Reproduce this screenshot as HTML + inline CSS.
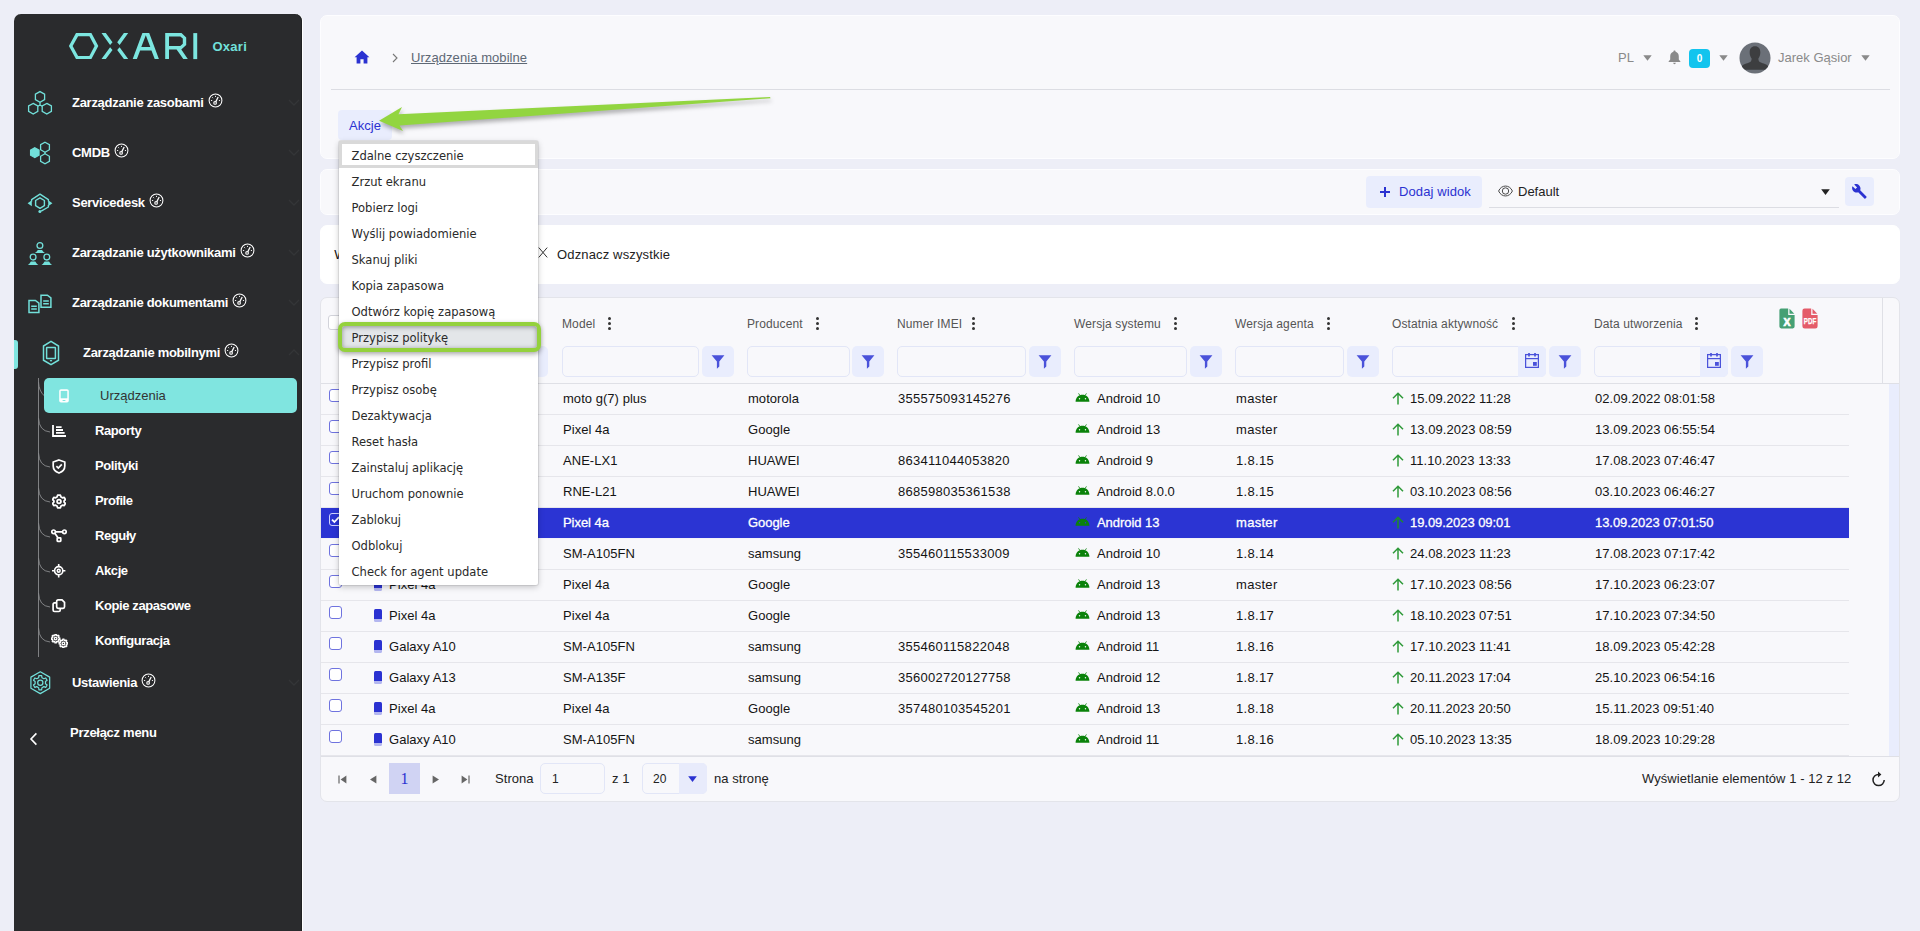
<!DOCTYPE html>
<html lang="pl"><head><meta charset="utf-8"><title>Urządzenia mobilne</title>
<style>
*{box-sizing:border-box;margin:0;padding:0}
html,body{width:1920px;height:931px;overflow:hidden}
body{background:#edeef7;font-family:"Liberation Sans",sans-serif;font-size:13px;color:#1e1e1e;position:relative}
.abs{position:absolute}
/* sidebar */
#side{position:absolute;left:14px;top:14px;width:288px;height:930px;background:#2a2b2d;border-radius:7px 7px 0 0;box-shadow:inset -1px 0 0 #1f2022, 1px 0 0 #fff}
.logo-t{position:absolute;left:198.5px;top:25px;color:#72e0da;font-weight:bold;font-size:13px;letter-spacing:0.25px}
.nav{position:absolute;left:58px;color:#fff;font-weight:bold;font-size:13px;letter-spacing:-0.28px;white-space:nowrap;line-height:16px}
.nav svg.g{vertical-align:top;margin-left:4px;position:relative;top:-2px}
.sub{position:absolute;left:81px;color:#fff;font-weight:bold;font-size:13px;letter-spacing:-0.4px;white-space:nowrap;line-height:16px}
.chev{position:absolute;left:274px}
.ico{position:absolute}
#active{position:absolute;left:30px;top:364px;width:253px;height:35px;background:#80e5e0;border-radius:5px}
#active span{position:absolute;left:56px;top:10px;font-size:13px;color:#333;line-height:16px}
#bar{position:absolute;left:0;top:326px;width:4px;height:29px;background:#80e5e0;border-radius:0 3px 3px 0}
/* cards */
.card{position:absolute;left:320px;width:1580px;background:#f8f8fb;border-radius:7px;border:1px solid #fdfdff}
#c1{top:15px;height:144px}
#c2{top:169px;height:46px}
#c3{top:225px;height:59px;background:#fff;border-color:#fff}
#c4{top:297px;height:505px;border:1px solid #e3e4ea;overflow:hidden}
.hr{position:absolute;left:331px;top:89px;width:1559px;height:1px;background:#dcdde3}
.crumb{position:absolute;left:411px;top:50px;font-size:13px;color:#5e6875;text-decoration:underline;letter-spacing:0.07px;line-height:16px}
.top-t{position:absolute;font-size:13px;color:#8a8a8a;line-height:16px;letter-spacing:0}
#akcje{position:absolute;left:338px;top:110px;width:54px;height:30px;background:#e9edfd;border-radius:4px;color:#2b32d1;font-size:13px;line-height:32px;padding-left:11px;letter-spacing:0.05px}
#dodaj{position:absolute;left:1366px;top:176px;width:116px;height:32px;background:#e9edfd;border-radius:4px;color:#2b32d1;font-size:13px;line-height:31px;padding-left:33px;letter-spacing:0.1px}
#wrench{position:absolute;left:1845px;top:177px;width:29px;height:29px;background:#e9edfd;border-radius:4px}
#defsel{position:absolute;left:1489px;top:176px;width:350px;height:32px;border-bottom:1px solid #dcdde3}
#defsel span{position:absolute;left:29px;top:8px;font-size:13px;line-height:16px;color:#222;letter-spacing:0}
#odz{position:absolute;left:557px;top:247px;font-size:13px;line-height:16px;color:#222;letter-spacing:0.15px}
/* table */
.th{position:absolute;top:317px;font-size:12px;color:#555;line-height:15px;letter-spacing:0.12px;white-space:nowrap}
.dots{position:absolute;top:317px;width:4px}
.dots i{display:block;width:3px;height:3px;border-radius:50%;background:#333;margin-bottom:2px}
.fin{position:absolute;top:346px;height:31px;border:1px solid #e2e6f7;border-radius:5px;background:#f8f8fb}
.fbtn{position:absolute;top:346px;width:32px;height:31px;border-radius:5px;background:#e9edfd}
.fbtn svg{position:absolute;left:9px;top:9px}
.cal{position:absolute;top:346px;width:28px;height:31px;border-radius:0 5px 5px 0;background:#e9edfd}
#thline{position:absolute;left:321px;top:383px;width:1578px;height:1px;background:#dfe0e6}
#vline{position:absolute;left:1882px;top:298px;width:1px;height:85px;background:#dfe0e6}
#scroll{position:absolute;left:1889px;top:384px;width:10px;height:372px;background:#e9edfd}
.row{position:absolute;left:321px;width:1528px;height:31px;border-bottom:1px solid #e6e6eb;font-size:13px;line-height:16px;color:#141414;letter-spacing:0.04px}
.row.sel{background:#2b34d3;color:#fff;border-bottom-color:#f3f3f8;-webkit-text-stroke:0.3px #fff;letter-spacing:-0.05px}
.row.sel .rbg{position:absolute;left:0;top:0;width:100%;height:30px;background:#2b34d3}
.row.sel .up path{stroke:#1f8c2d}
.row .c{position:absolute;top:7px;white-space:nowrap}
.c0{left:68px}.c1{left:242px}.c2{left:427px}.c3{left:577px;letter-spacing:0.28px}.c4{left:776px}.c5{left:915px;letter-spacing:0.3px}.c6{left:1089px}.c7{left:1274px}
.cb{position:absolute;left:8px;top:5px;width:13px;height:13px;border:1px solid #6f73df;border-radius:3px;background:#fff}
.cb.on{background:#2b34d3;border-color:#cfd2ff}
.cb svg{position:absolute;left:-1px;top:-1px}
.dev{position:absolute;left:52.8px;top:7.7px;width:8.4px;height:13px;background:#2b32d1;border-radius:1.5px;border-bottom:3.6px solid #b4b7f0}
.andr{position:absolute;left:754px;top:9px}
.up{position:absolute;left:1071px;top:8px}
#pager{position:absolute;left:321px;top:756px;width:1578px;height:44px;border-top:1px solid #dfe0e6}
.pg-t{position:absolute;font-size:13px;line-height:16px;color:#222;letter-spacing:0.06px;white-space:nowrap}
/* dropdown */
#menu{position:absolute;left:339px;top:141px;width:199px;height:444px;background:#fff;box-shadow:0 2px 6px rgba(0,0,0,.22),0 0 0 1px rgba(0,0,0,.07);border-radius:2px;font-family:"DejaVu Sans Condensed","DejaVu Sans","Liberation Sans",sans-serif}
.mi{position:absolute;left:0;width:199px;height:26px;line-height:27px;padding-left:12.5px;font-size:12.85px;color:#2a2a2a;letter-spacing:0;white-space:nowrap}
.mi.first{border:3px solid #d9d9d9;padding-left:9.5px;line-height:23px;height:27px;background:#fff}
#hl{position:absolute;left:338px;top:322px;width:203px;height:30px;border:4px solid #94d13d;border-radius:7px;background:#e3e6e9;box-shadow:0 2px 5px rgba(0,0,0,.35), inset 0 1px 5px rgba(0,0,0,.38)}
#hl span{position:absolute;left:9.5px;top:0;line-height:24px;font-size:12.85px;color:#2a2a2a;letter-spacing:0;font-family:"DejaVu Sans Condensed","DejaVu Sans","Liberation Sans",sans-serif;white-space:nowrap}

</style></head>
<body>
<div id="side">
  <!-- logo -->
  <svg class="ico" style="left:50px;top:16px" width="140" height="32" viewBox="64 30 140 32">
    <g fill="#7ce6e0">
      <path fill-rule="evenodd" d="M68.9 46.1 L76 33.1 H91.4 L98.3 46.1 L91.4 59.1 H76 Z M72.6 46.1 L78.1 55.9 H89.4 L94.6 46.1 L89.4 36.3 H78.1 Z"/>
      <path d="M101.5 33.1 H105.8 L112.5 42.3 L110.1 44.9 Z M101.5 59.1 H105.8 L112.5 49.9 L110.1 47.3 Z"/>
      <path d="M128.2 33.1 H123.9 L117.2 42.3 L119.6 44.9 Z M128.2 59.1 H123.9 L117.2 49.9 L119.6 47.3 Z"/>
      <path fill-rule="evenodd" d="M132.7 59.1 L142.4 33.1 H149.2 L158.9 59.1 H154.7 L151.45 50.4 H140.15 L136.9 59.1 Z M141.3 47.1 H150.3 L145.8 35.2 Z"/>
      <path fill-rule="evenodd" d="M165.2 59.1 V33.1 H181.5 L186.2 37.4 V45 L181.3 49.4 L187.8 59.1 H183.3 L176.6 49.4 H169 V59.1 Z M169 36.4 V46.1 H180.3 L182.8 43.8 V38.6 L180.3 36.4 Z"/>
      <rect x="193.3" y="33.1" width="3.9" height="26"/>
    </g>
  </svg>
  <div class="logo-t">Oxari</div>

  <div id="bar"></div>

  <!-- nav icons -->
  <svg class="ico" style="left:13px;top:76px" width="26" height="26" viewBox="0 0 26 26" fill="none" stroke="#72e0da" stroke-width="1.3">
    <polygon points="13,1.6 17.6,4.2 17.6,9.6 13,12.2 8.4,9.6 8.4,4.2"/>
    <polygon points="6.2,13.4 10.8,16 10.8,21.4 6.2,24 1.6,21.4 1.6,16"/>
    <polygon points="19.8,13.4 24.4,16 24.4,21.4 19.8,24 15.2,21.4 15.2,16"/>
    <path d="M13 12.2 V15 M13 15 L10.8 16.2 M13 15 L15.2 16.2"/>
  </svg>
  <svg class="ico" style="left:13px;top:126px" width="26" height="26" viewBox="0 0 26 26" fill="none" stroke="#72e0da" stroke-width="1.3">
    <polygon points="7.8,7.8 12,10.2 12,15.2 7.8,17.6 3.6,15.2 3.6,10.2" fill="#72e0da"/>
    <polygon points="18,2.2 22.4,4.7 22.4,9.7 18,12.2 13.6,9.7 13.6,4.7"/>
    <polygon points="18,13.8 22.4,16.3 22.4,21.3 18,23.8 13.6,21.3 13.6,16.3"/>
    <path d="M18 12.2 V13.8"/>
  </svg>
  <svg class="ico" style="left:13px;top:178px" width="26" height="22" viewBox="0 0 26 22" fill="none" stroke="#72e0da" stroke-width="1.4" stroke-linejoin="round">
    <polygon points="13,5.9 17.4,8.5 17.4,13.7 13,16.3 8.6,13.7 8.6,8.5"/>
    <path d="M4.6 9.6 V7.6 L13 2.2 L21.4 7.6 V9.6 M21.4 13 V15 L14.2 19.2"/>
    <path d="M0.6 11.3 L4.8 8.3 V14.3 Z M25.4 11.3 L21.2 8.3 V14.3 Z" fill="#72e0da" stroke="none"/>
    <circle cx="12.9" cy="19.6" r="1.5" fill="#72e0da" stroke="none"/>
  </svg>
  <svg class="ico" style="left:13px;top:226px" width="26" height="26" viewBox="0 0 26 26" fill="none" stroke="#72e0da" stroke-width="1.3">
    <circle cx="12.9" cy="5.5" r="2.9"/>
    <path d="M7.9 13 Q9.6 12 10.8 9.9 H15 Q16.2 12 17.9 13 Z" fill="#72e0da" stroke="none"/>
    <circle cx="6.1" cy="17.1" r="2.9"/>
    <path d="M0.8 25 Q2.6 24 3.9 21.6 H8.3 Q9.6 24 11.4 25 Z" fill="#72e0da" stroke="none"/>
    <circle cx="19.8" cy="17.1" r="2.9"/>
    <path d="M14.5 25 Q16.3 24 17.6 21.6 H22 Q23.3 24 25.1 25 Z" fill="#72e0da" stroke="none"/>
  </svg>
  <svg class="ico" style="left:13px;top:279px" width="26" height="22" viewBox="0 0 26 22" fill="none" stroke="#72e0da" stroke-width="1.5">
    <path d="M14 2.2 H20.4 L23.9 4.9 V14.3 H14 Z"/>
    <path d="M16.2 8 H21.8 M16.2 10.8 H21.8" stroke-width="1.4"/>
    <path d="M2 7.4 H8.4 L11.9 10.1 V19.6 H2 Z"/>
    <path d="M4.2 13.2 H9.8 M4.2 16 H9.8" stroke-width="1.4"/>
  </svg>
  <svg class="ico" style="left:28px;top:326px" width="18" height="26" viewBox="0 0 18 26" fill="none" stroke="#72e0da" stroke-width="1.5">
    <polygon points="9,1.4 16.5,6 16.5,20.2 9,24.6 1.5,20.2 1.5,6"/>
    <rect x="4.6" y="7.6" width="8.8" height="11" rx="0.4"/>
    <path d="M7.9 20.7 H10.1" stroke-width="1.3"/>
  </svg>
  <svg class="ico" style="left:14.9px;top:656.2px" width="22.6" height="25.4" viewBox="0 0 26 28" fill="none" stroke="#72e0da" stroke-width="1.4" stroke-linejoin="round">
    <polygon points="13,1.4 23.8,7.6 23.8,20.4 13,26.6 2.2,20.4 2.2,7.6"/>
    <circle cx="13" cy="14" r="3"/>
    <path d="M11.11 8.20 L11.42 5.85 L14.58 5.85 L14.89 8.20 L17.08 9.47 L19.26 8.55 L20.85 11.30 L18.97 12.73 L18.97 15.27 L20.85 16.70 L19.26 19.45 L17.08 18.53 L14.89 19.80 L14.58 22.15 L11.42 22.15 L11.11 19.80 L8.92 18.53 L6.74 19.45 L5.15 16.70 L7.03 15.27 L7.03 12.73 L5.15 11.30 L6.74 8.55 L8.92 9.47 Z"/>
  </svg>

  <!-- nav labels -->
  <div class="nav" style="top:81px">Zarządzanie zasobami<svg class="g" width="15" height="15" viewBox="-0.25 -0.25 14.5 14.5"><use href="#gauge"/></svg></div>
  <div class="nav" style="top:131px">CMDB<svg class="g" width="15" height="15" viewBox="-0.25 -0.25 14.5 14.5"><use href="#gauge"/></svg></div>
  <div class="nav" style="top:181px">Servicedesk<svg class="g" width="15" height="15" viewBox="-0.25 -0.25 14.5 14.5"><use href="#gauge"/></svg></div>
  <div class="nav" style="top:231px">Zarządzanie użytkownikami<svg class="g" width="15" height="15" viewBox="-0.25 -0.25 14.5 14.5"><use href="#gauge"/></svg></div>
  <div class="nav" style="top:281px">Zarządzanie dokumentami<svg class="g" width="15" height="15" viewBox="-0.25 -0.25 14.5 14.5"><use href="#gauge"/></svg></div>
  <div class="nav" style="top:331px;left:69px">Zarządzanie mobilnymi<svg class="g" width="15" height="15" viewBox="-0.25 -0.25 14.5 14.5"><use href="#gauge"/></svg></div>
  <div class="nav" style="top:661px">Ustawienia<svg class="g" width="15" height="15" viewBox="-0.25 -0.25 14.5 14.5"><use href="#gauge"/></svg></div>
  <div class="nav" style="top:711px;left:56px">Przełącz menu</div>
  <svg class="ico" style="left:15px;top:718px" width="9" height="14" viewBox="0 0 9 14" fill="none" stroke="#fff" stroke-width="1.6"><path d="M7.4 1.4 L2 7 L7.4 12.6"/></svg>

  <!-- chevrons -->
  <svg class="chev" style="top:85px" width="12" height="7" viewBox="0 0 12 7" fill="none" stroke="#343537" stroke-width="1.4"><path d="M1 1 L6 6 L11 1"/></svg>
  <svg class="chev" style="top:135px" width="12" height="7" viewBox="0 0 12 7" fill="none" stroke="#343537" stroke-width="1.4"><path d="M1 1 L6 6 L11 1"/></svg>
  <svg class="chev" style="top:185px" width="12" height="7" viewBox="0 0 12 7" fill="none" stroke="#343537" stroke-width="1.4"><path d="M1 1 L6 6 L11 1"/></svg>
  <svg class="chev" style="top:235px" width="12" height="7" viewBox="0 0 12 7" fill="none" stroke="#343537" stroke-width="1.4"><path d="M1 1 L6 6 L11 1"/></svg>
  <svg class="chev" style="top:285px" width="12" height="7" viewBox="0 0 12 7" fill="none" stroke="#343537" stroke-width="1.4"><path d="M1 1 L6 6 L11 1"/></svg>
  <svg class="chev" style="top:335px" width="12" height="7" viewBox="0 0 12 7" fill="none" stroke="#343537" stroke-width="1.4"><path d="M1 6 L6 1 L11 6"/></svg>
  <svg class="chev" style="top:665px" width="12" height="7" viewBox="0 0 12 7" fill="none" stroke="#343537" stroke-width="1.4"><path d="M1 1 L6 6 L11 1"/></svg>

  <!-- tree -->
  <svg class="ico" style="left:22px;top:364px" width="20" height="300" viewBox="0 0 20 300" fill="none" stroke="#8a8b8d" stroke-width="0.9">
    <path d="M2.5 0 V279"/>
    <path d="M2.5 4 Q2.8 13 8.5 18"/>
    <path d="M2.5 40 Q3 53 14 54"/>
    <path d="M2.5 75 Q3 88 14 89"/>
    <path d="M2.5 110 Q3 123 14 124"/>
    <path d="M2.5 145 Q3 158 14 159"/>
    <path d="M2.5 180 Q3 193 14 194"/>
    <path d="M2.5 215 Q3 228 14 229"/>
    <path d="M2.5 250 Q3 263 14 264"/>
  </svg>
  <div id="active"><svg class="ico" style="left:15.4px;top:11.4px" width="10" height="14" viewBox="0 0 10 14"><rect x="0.2" y="0.2" width="9.6" height="13.4" rx="1.8" fill="#fff"/><rect x="1.7" y="1.9" width="6.6" height="7.4" fill="#80e5e0"/><rect x="3.6" y="11" width="2.8" height="1" fill="#80e5e0"/></svg><span>Urządzenia</span></div>

  <!-- sub icons -->
  <svg class="ico" style="left:38px;top:411px" width="14" height="12" viewBox="0 0 14 12" fill="none" stroke="#fff" stroke-width="1.8"><path d="M1 0 V11 H14 M4 2.2 H9.6 M4 5 H11 M4 7.8 H12.6"/></svg>
  <svg class="ico" style="left:38px;top:445px" width="14" height="15" viewBox="0 0 14 15" fill="none" stroke="#fff" stroke-width="1.7"><path d="M7 1 L12.8 3 V7 C12.8 10.6 10.4 12.8 7 14 C3.6 12.8 1.2 10.6 1.2 7 V3 Z"/><path d="M4.4 7.2 L6.3 9 L9.8 5.4"/></svg>
  <svg class="ico" style="left:38px;top:480px" width="14" height="15" viewBox="0 0 14 15" fill="none" stroke="#fff" stroke-width="1.8"><circle cx="7" cy="7.5" r="1.9"/><path d="M5.6 1.2 H8.4 L9 3 L10.4 3.8 L12.2 3.3 L13.4 5.6 L12.1 6.9 V8.1 L13.4 9.4 L12.2 11.7 L10.4 11.2 L9 12 L8.4 13.8 H5.6 L5 12 L3.6 11.2 L1.8 11.7 L0.6 9.4 L1.9 8.1 V6.9 L0.6 5.6 L1.8 3.3 L3.6 3.8 L5 3 Z" stroke-linejoin="round"/></svg>
  <svg class="ico" style="left:37px;top:515px" width="16" height="14" viewBox="0 0 16 14" fill="none" stroke="#fff" stroke-width="1.7"><circle cx="2.6" cy="2.8" r="1.8"/><circle cx="13.4" cy="2.8" r="1.8"/><rect x="6.2" y="8.8" width="3.6" height="3.6" rx="0.6"/><path d="M4.4 2.8 H11.6 M3.8 4.2 L7 8.8"/></svg>
  <svg class="ico" style="left:38.3px;top:550.3px" width="13.4" height="13.4" viewBox="0 0 15 15" fill="none" stroke="#fff" stroke-width="1.8"><circle cx="7.5" cy="7.5" r="4.6"/><circle cx="7.5" cy="7.5" r="1.6"/><path d="M7.5 0 V3 M7.5 12 V15 M0 7.5 H3 M12 7.5 H15"/></svg>
  <svg class="ico" style="left:38.2px;top:585.4px" width="13.8" height="13.4" viewBox="0 0 15 15" fill="none" stroke="#fff" stroke-width="1.9"><path d="M6.6 1 H11 L13.8 3.8 V8.8 Q13.8 10.4 12.2 10.4 H6.6 Q5 10.4 5 8.8 V2.6 Q5 1 6.6 1 Z"/><path d="M4.6 4.4 H2.6 Q1 4.4 1 6 V12.4 Q1 14 2.6 14 H7.4 Q9 14 9 12.4 V10.8"/></svg>
  <svg class="ico" style="left:36.6px;top:620.4px" width="17" height="14" viewBox="0 0 17 14" fill="none" stroke="#fff" stroke-width="1.3" stroke-linejoin="round"><path d="M3.80 1.61 L3.93 0.35 L5.27 0.35 L5.40 1.61 L6.15 1.92 L7.13 1.12 L8.08 2.07 L7.28 3.05 L7.59 3.80 L8.85 3.93 L8.85 5.27 L7.59 5.40 L7.28 6.15 L8.08 7.13 L7.13 8.08 L6.15 7.28 L5.40 7.59 L5.27 8.85 L3.93 8.85 L3.80 7.59 L3.05 7.28 L2.07 8.08 L1.12 7.13 L1.92 6.15 L1.61 5.40 L0.35 5.27 L0.35 3.93 L1.61 3.80 L1.92 3.05 L1.12 2.07 L2.07 1.12 L3.05 1.92 Z"/><circle cx="4.6" cy="4.6" r="1.3"/><path d="M11.60 6.41 L11.73 5.15 L13.07 5.15 L13.20 6.41 L13.95 6.72 L14.93 5.92 L15.88 6.87 L15.08 7.85 L15.39 8.60 L16.65 8.73 L16.65 10.07 L15.39 10.20 L15.08 10.95 L15.88 11.93 L14.93 12.88 L13.95 12.08 L13.20 12.39 L13.07 13.65 L11.73 13.65 L11.60 12.39 L10.85 12.08 L9.87 12.88 L8.92 11.93 L9.72 10.95 L9.41 10.20 L8.15 10.07 L8.15 8.73 L9.41 8.60 L9.72 7.85 L8.92 6.87 L9.87 5.92 L10.85 6.72 Z"/><circle cx="12.4" cy="9.4" r="1.3"/></svg>

  <div class="sub" style="top:409px">Raporty</div>
  <div class="sub" style="top:444px">Polityki</div>
  <div class="sub" style="top:479px">Profile</div>
  <div class="sub" style="top:514px">Reguły</div>
  <div class="sub" style="top:549px">Akcje</div>
  <div class="sub" style="top:584px">Kopie zapasowe</div>
  <div class="sub" style="top:619px">Konfiguracja</div>
</div>

<svg width="0" height="0" style="position:absolute"><defs>
  <g id="gauge" fill="none" stroke="#fff" stroke-width="1">
    <circle cx="7" cy="7" r="6.2"/>
    <circle cx="6.6" cy="9.4" r="1.3"/>
    <path d="M7.2 8.3 L9.6 3.6" stroke-width="1.2"/>
    <path d="M2.6 7 H3.8 M3.9 3.9 L4.7 4.7 M7 2.5 V3.6 M11.4 7 H10.3" stroke-width="0.9"/>
  </g>
</defs></svg>

<!-- cards -->
<div class="card" id="c1"></div>
<div class="card" id="c2"></div>
<div class="card" id="c3"></div>
<div class="card" id="c4"></div>
<div class="hr"></div>

<!-- breadcrumb -->
<svg class="abs" style="left:354px;top:50px" width="16" height="14" viewBox="0 0 16 14"><path d="M8 0.4 L15.4 7.2 H13.4 V13.6 H9.6 V9.2 H6.4 V13.6 H2.6 V7.2 H0.6 Z" fill="#2b32d1"/></svg>
<svg class="abs" style="left:392px;top:53px" width="6" height="10" viewBox="0 0 6 10" fill="none" stroke="#777" stroke-width="1.1"><path d="M1 1 L5 5 L1 9"/></svg>
<div class="crumb">Urządzenia mobilne</div>

<!-- top right -->
<div class="top-t" style="left:1618px;top:50px">PL</div>
<svg class="abs" style="left:1643px;top:55px" width="9" height="6" viewBox="0 0 9 6"><path d="M0.3 0.3 H8.7 L4.5 5.8 Z" fill="#8a8a8a"/></svg>
<svg class="abs" style="left:1668px;top:50px" width="13" height="15" viewBox="0 0 13 15"><path d="M6.5 0.6 C7.2 0.6 7.6 1.1 7.6 1.8 C9.8 2.4 10.8 4.2 10.8 6.4 V9.6 L12.4 11.4 V12 H0.6 V11.4 L2.2 9.6 V6.4 C2.2 4.2 3.2 2.4 5.4 1.8 C5.4 1.1 5.8 0.6 6.5 0.6 Z M5.2 12.8 H7.8 C7.8 13.6 7.2 14.2 6.5 14.2 C5.8 14.2 5.2 13.6 5.2 12.8 Z" fill="#8a8a8a"/></svg>
<div class="abs" style="left:1689px;top:49px;width:21px;height:19px;border-radius:4px;background:#12c4ee;color:#fff;font-weight:bold;font-size:10px;line-height:19px;text-align:center">0</div>
<svg class="abs" style="left:1719px;top:55px" width="9" height="6" viewBox="0 0 9 6"><path d="M0.3 0.3 H8.7 L4.5 5.8 Z" fill="#8a8a8a"/></svg>
<svg class="abs" style="left:1739px;top:41.5px" width="32" height="32" viewBox="0 0 33 33"><defs><clipPath id="av"><circle cx="16.5" cy="16.5" r="16"/></clipPath></defs><circle cx="16.5" cy="16.5" r="16" fill="#6b7078"/><g clip-path="url(#av)" fill="#3d3e40"><path d="M16.5 4.4 C20.2 4.4 22 7 22 10.6 C22 13.4 21.2 15.6 20 17 C20 19 20.4 20.2 22 21 C25 22.4 29 22.8 30.4 25.6 V28.6 H2.6 V25.6 C4 22.8 8 22.4 11 21 C12.6 20.2 13 19 13 17 C11.8 15.6 11 13.4 11 10.6 C11 7 12.8 4.4 16.5 4.4 Z"/></g></svg>
<div class="top-t" style="left:1778px;top:50px">Jarek Gąsior</div>
<svg class="abs" style="left:1861px;top:55px" width="9" height="6" viewBox="0 0 9 6"><path d="M0.3 0.3 H8.7 L4.5 5.8 Z" fill="#8a8a8a"/></svg>

<!-- akcje -->
<div id="akcje">Akcje</div>

<!-- view bar -->
<div id="dodaj">Dodaj widok</div>
<svg class="abs" style="left:1380px;top:187px" width="10" height="10" viewBox="0 0 10 10" fill="none" stroke="#2b32d1" stroke-width="2"><path d="M5 0 V10 M0 5 H10"/></svg>
<div id="defsel"><svg class="abs" style="left:9px;top:9px" width="15" height="12" viewBox="0 0 15 12" fill="none" stroke="#4a4a4a" stroke-width="1"><path d="M0.6 6 C3.4 -0.6 11.6 -0.6 14.4 6 C11.6 12.6 3.4 12.6 0.6 6 Z"/><circle cx="7.5" cy="6" r="3.2"/></svg><span>Default</span>
<svg class="abs" style="left:332px;top:13px" width="9" height="6" viewBox="0 0 9 6"><path d="M0.2 0.2 H8.8 L4.5 5.9 Z" fill="#222"/></svg></div>
<div id="wrench"><svg class="abs" style="left:7px;top:7px" width="15" height="15" viewBox="0 0 15 15"><path d="M14.4 12.4 L8.2 6.2 C8.8 4.6 8.5 2.7 7.2 1.4 C5.8 0 3.8 -0.2 2.2 0.5 L5.1 3.4 L3.4 5.1 L0.5 2.2 C-0.3 3.8 0 5.8 1.4 7.2 C2.7 8.5 4.6 8.8 6.2 8.2 L12.4 14.4 C12.7 14.7 13.1 14.7 13.4 14.4 L14.4 13.4 C14.7 13.1 14.7 12.7 14.4 12.4 Z" fill="#2b32d1"/></svg></div>

<!-- filter row -->
<svg class="abs" style="left:538px;top:247px" width="10" height="11" viewBox="0 0 10 11" fill="none" stroke="#333" stroke-width="1"><path d="M0.8 0.6 L9.2 10.4 M9.2 0.6 L0.8 10.4"/></svg>
<div id="odz">Odznacz wszystkie</div>
<div class="abs" style="left:334.3px;top:247px;font-size:13px;line-height:16px;color:#111;white-space:nowrap">Wybrano: 1</div>

<!-- table header -->
<div class="abs cbh" style="left:328px;top:315px;width:15px;height:15px;border:1px solid #d2d3da;border-radius:3px;background:#fff"></div>
<div class="th" style="left:389px">Nazwa</div><div class="dots" style="left:436px"><i></i><i></i><i></i></div>
<div class="th" style="left:562px">Model</div><div class="dots" style="left:608px"><i></i><i></i><i></i></div>
<div class="th" style="left:747px">Producent</div><div class="dots" style="left:816px"><i></i><i></i><i></i></div>
<div class="th" style="left:897px">Numer IMEI</div><div class="dots" style="left:972px"><i></i><i></i><i></i></div>
<div class="th" style="left:1074px">Wersja systemu</div><div class="dots" style="left:1174px"><i></i><i></i><i></i></div>
<div class="th" style="left:1235px">Wersja agenta</div><div class="dots" style="left:1327px"><i></i><i></i><i></i></div>
<div class="th" style="left:1392px">Ostatnia aktywność</div><div class="dots" style="left:1512px"><i></i><i></i><i></i></div>
<div class="th" style="left:1594px">Data utworzenia</div><div class="dots" style="left:1695px"><i></i><i></i><i></i></div>

<div class="fin" style="left:389px;width:130px"></div><div class="fbtn" style="left:516px"></div>
<div class="fin" style="left:562px;width:137px"></div><div class="fbtn" style="left:702px"><svg width="14" height="14" viewBox="0 0 14 14"><use href="#fun"/></svg></div>
<div class="fin" style="left:747px;width:103px"></div><div class="fbtn" style="left:852px"><svg width="14" height="14" viewBox="0 0 14 14"><use href="#fun"/></svg></div>
<div class="fin" style="left:897px;width:129px"></div><div class="fbtn" style="left:1029px"><svg width="14" height="14" viewBox="0 0 14 14"><use href="#fun"/></svg></div>
<div class="fin" style="left:1074px;width:113px"></div><div class="fbtn" style="left:1190px"><svg width="14" height="14" viewBox="0 0 14 14"><use href="#fun"/></svg></div>
<div class="fin" style="left:1235px;width:109px"></div><div class="fbtn" style="left:1347px"><svg width="14" height="14" viewBox="0 0 14 14"><use href="#fun"/></svg></div>
<div class="fin" style="left:1392px;width:154px"></div><div class="cal" style="left:1518px"><svg class="abs" style="left:7px;top:7px" width="14" height="15" viewBox="0 0 14 15"><use href="#cal"/></svg></div><div class="fbtn" style="left:1549px"><svg width="14" height="14" viewBox="0 0 14 14"><use href="#fun"/></svg></div>
<div class="fin" style="left:1594px;width:134px"></div><div class="cal" style="left:1700px"><svg class="abs" style="left:7px;top:7px" width="14" height="15" viewBox="0 0 14 15"><use href="#cal"/></svg></div><div class="fbtn" style="left:1731px"><svg width="14" height="14" viewBox="0 0 14 14"><use href="#fun"/></svg></div>
<svg width="0" height="0" style="position:absolute"><defs>
  <path id="fun" d="M0.6 0.3 H13.4 L8.3 6.6 V11.4 L5.9 13.8 V6.6 Z" fill="#4a52da"/>
  <g id="cal" fill="none" stroke="#4a52da" stroke-width="1.25"><rect x="0.6" y="1.6" width="12.8" height="12.8"/><path d="M0.6 5.6 H13.4"/><path d="M4 0 V3.4 M10 0 V3.4" stroke-width="1.7"/><rect x="8" y="9" width="3.8" height="3.8" fill="#4a52da" stroke="none"/></g>
</defs></svg>

<!-- export icons -->
<svg class="abs" style="left:1779px;top:308px" width="16" height="21" viewBox="0 0 16 21"><path d="M2 0.6 H9.2 V7 H15.6 V18.6 Q15.6 20.4 13.8 20.4 H2.2 Q0.4 20.4 0.4 18.6 V2.2 Q0.4 0.6 2 0.6 Z" fill="#45a074"/><path d="M10.5 0.8 L15.3 5.7 H10.5 Z" fill="#45a074"/><text x="8" y="17.9" font-family="Liberation Sans, sans-serif" font-weight="bold" font-size="10.5" fill="#fff" stroke="#fff" stroke-width="0.7" text-anchor="middle">X</text></svg>
<svg class="abs" style="left:1802px;top:308px" width="16" height="21" viewBox="0 0 16 21"><path d="M2.6 0.5 H9.2 V7 H15.6 V18.2 Q15.6 20.5 13.3 20.5 H2.7 Q0.4 20.5 0.4 18.2 V2.8 Q0.4 0.5 2.6 0.5 Z" fill="#e45b69"/><path d="M10.5 0.8 L15.3 5.7 H10.5 Z" fill="#e45b69"/><text x="8" y="15.6" font-family="Liberation Sans, sans-serif" font-weight="bold" font-size="8.6" fill="#fff" stroke="#fff" stroke-width="0.25" text-anchor="middle" textLength="12.4" lengthAdjust="spacingAndGlyphs">PDF</text></svg>

<div id="thline"></div><div id="vline"></div><div id="scroll"></div>

<div class="row" style="top:384px">
<div class="rbg"></div><span class="cb"></span>
<span class="dev"></span><span class="c c0">moto g(7) plus</span>
<span class="c c1">moto g(7) plus</span><span class="c c2">motorola</span><span class="c c3">355575093145276</span>
<svg class="andr" viewBox="0 0 16 10" width="15" height="9"><path fill-rule="evenodd" d="M0.3 9.6 C0.6 4.6 3.8 1.9 8 1.9 S15.4 4.6 15.7 9.6 Z M3.9 6.4 a0.8 0.8 0 1 0 1.6 0 a0.8 0.8 0 1 0 -1.6 0 Z M10.5 6.4 a0.8 0.8 0 1 0 1.6 0 a0.8 0.8 0 1 0 -1.6 0 Z" fill="#0a820a"/><path d="M3.6 0.4 L5.3 3 M12.4 0.4 L10.7 3" stroke="#0a820a" stroke-width="0.9" fill="none"/></svg>
<span class="c c4">Android 10</span><span class="c c5">master</span>
<svg class="up" viewBox="0 0 12 13" width="12" height="13"><path d="M6 12.5 V1.5 M1 6.3 L6 1.3 L11 6.3" fill="none" stroke="#2f9a3a" stroke-width="1.5"/></svg>
<span class="c c6">15.09.2022 11:28</span><span class="c c7">02.09.2022 08:01:58</span>
</div>
<div class="row" style="top:415px">
<div class="rbg"></div><span class="cb"></span>
<span class="dev"></span><span class="c c0">Pixel 4a</span>
<span class="c c1">Pixel 4a</span><span class="c c2">Google</span><span class="c c3"></span>
<svg class="andr" viewBox="0 0 16 10" width="15" height="9"><path fill-rule="evenodd" d="M0.3 9.6 C0.6 4.6 3.8 1.9 8 1.9 S15.4 4.6 15.7 9.6 Z M3.9 6.4 a0.8 0.8 0 1 0 1.6 0 a0.8 0.8 0 1 0 -1.6 0 Z M10.5 6.4 a0.8 0.8 0 1 0 1.6 0 a0.8 0.8 0 1 0 -1.6 0 Z" fill="#0a820a"/><path d="M3.6 0.4 L5.3 3 M12.4 0.4 L10.7 3" stroke="#0a820a" stroke-width="0.9" fill="none"/></svg>
<span class="c c4">Android 13</span><span class="c c5">master</span>
<svg class="up" viewBox="0 0 12 13" width="12" height="13"><path d="M6 12.5 V1.5 M1 6.3 L6 1.3 L11 6.3" fill="none" stroke="#2f9a3a" stroke-width="1.5"/></svg>
<span class="c c6">13.09.2023 08:59</span><span class="c c7">13.09.2023 06:55:54</span>
</div>
<div class="row" style="top:446px">
<div class="rbg"></div><span class="cb"></span>
<span class="dev"></span><span class="c c0">P20 lite</span>
<span class="c c1">ANE-LX1</span><span class="c c2">HUAWEI</span><span class="c c3">863411044053820</span>
<svg class="andr" viewBox="0 0 16 10" width="15" height="9"><path fill-rule="evenodd" d="M0.3 9.6 C0.6 4.6 3.8 1.9 8 1.9 S15.4 4.6 15.7 9.6 Z M3.9 6.4 a0.8 0.8 0 1 0 1.6 0 a0.8 0.8 0 1 0 -1.6 0 Z M10.5 6.4 a0.8 0.8 0 1 0 1.6 0 a0.8 0.8 0 1 0 -1.6 0 Z" fill="#0a820a"/><path d="M3.6 0.4 L5.3 3 M12.4 0.4 L10.7 3" stroke="#0a820a" stroke-width="0.9" fill="none"/></svg>
<span class="c c4">Android 9</span><span class="c c5">1.8.15</span>
<svg class="up" viewBox="0 0 12 13" width="12" height="13"><path d="M6 12.5 V1.5 M1 6.3 L6 1.3 L11 6.3" fill="none" stroke="#2f9a3a" stroke-width="1.5"/></svg>
<span class="c c6">11.10.2023 13:33</span><span class="c c7">17.08.2023 07:46:47</span>
</div>
<div class="row" style="top:477px">
<div class="rbg"></div><span class="cb"></span>
<span class="dev"></span><span class="c c0">Mate 10 lite</span>
<span class="c c1">RNE-L21</span><span class="c c2">HUAWEI</span><span class="c c3">868598035361538</span>
<svg class="andr" viewBox="0 0 16 10" width="15" height="9"><path fill-rule="evenodd" d="M0.3 9.6 C0.6 4.6 3.8 1.9 8 1.9 S15.4 4.6 15.7 9.6 Z M3.9 6.4 a0.8 0.8 0 1 0 1.6 0 a0.8 0.8 0 1 0 -1.6 0 Z M10.5 6.4 a0.8 0.8 0 1 0 1.6 0 a0.8 0.8 0 1 0 -1.6 0 Z" fill="#0a820a"/><path d="M3.6 0.4 L5.3 3 M12.4 0.4 L10.7 3" stroke="#0a820a" stroke-width="0.9" fill="none"/></svg>
<span class="c c4">Android 8.0.0</span><span class="c c5">1.8.15</span>
<svg class="up" viewBox="0 0 12 13" width="12" height="13"><path d="M6 12.5 V1.5 M1 6.3 L6 1.3 L11 6.3" fill="none" stroke="#2f9a3a" stroke-width="1.5"/></svg>
<span class="c c6">03.10.2023 08:56</span><span class="c c7">03.10.2023 06:46:27</span>
</div>
<div class="row sel" style="top:508px">
<div class="rbg"></div><span class="cb on"><svg viewBox="0 0 13 13" width="13" height="13"><path d="M3 6.6 L5.4 9 L10 4.2" fill="none" stroke="#fff" stroke-width="1.8"/></svg></span>
<span class="dev"></span><span class="c c0">Pixel 4a</span>
<span class="c c1">Pixel 4a</span><span class="c c2">Google</span><span class="c c3"></span>
<svg class="andr" viewBox="0 0 16 10" width="15" height="9"><path fill-rule="evenodd" d="M0.3 9.6 C0.6 4.6 3.8 1.9 8 1.9 S15.4 4.6 15.7 9.6 Z M3.9 6.4 a0.8 0.8 0 1 0 1.6 0 a0.8 0.8 0 1 0 -1.6 0 Z M10.5 6.4 a0.8 0.8 0 1 0 1.6 0 a0.8 0.8 0 1 0 -1.6 0 Z" fill="#0a820a"/><path d="M3.6 0.4 L5.3 3 M12.4 0.4 L10.7 3" stroke="#0a820a" stroke-width="0.9" fill="none"/></svg>
<span class="c c4">Android 13</span><span class="c c5">master</span>
<svg class="up" viewBox="0 0 12 13" width="12" height="13"><path d="M6 12.5 V1.5 M1 6.3 L6 1.3 L11 6.3" fill="none" stroke="#2f9a3a" stroke-width="1.5"/></svg>
<span class="c c6">19.09.2023 09:01</span><span class="c c7">13.09.2023 07:01:50</span>
</div>
<div class="row" style="top:539px">
<div class="rbg"></div><span class="cb"></span>
<span class="dev"></span><span class="c c0">Galaxy A10</span>
<span class="c c1">SM-A105FN</span><span class="c c2">samsung</span><span class="c c3">355460115533009</span>
<svg class="andr" viewBox="0 0 16 10" width="15" height="9"><path fill-rule="evenodd" d="M0.3 9.6 C0.6 4.6 3.8 1.9 8 1.9 S15.4 4.6 15.7 9.6 Z M3.9 6.4 a0.8 0.8 0 1 0 1.6 0 a0.8 0.8 0 1 0 -1.6 0 Z M10.5 6.4 a0.8 0.8 0 1 0 1.6 0 a0.8 0.8 0 1 0 -1.6 0 Z" fill="#0a820a"/><path d="M3.6 0.4 L5.3 3 M12.4 0.4 L10.7 3" stroke="#0a820a" stroke-width="0.9" fill="none"/></svg>
<span class="c c4">Android 10</span><span class="c c5">1.8.14</span>
<svg class="up" viewBox="0 0 12 13" width="12" height="13"><path d="M6 12.5 V1.5 M1 6.3 L6 1.3 L11 6.3" fill="none" stroke="#2f9a3a" stroke-width="1.5"/></svg>
<span class="c c6">24.08.2023 11:23</span><span class="c c7">17.08.2023 07:17:42</span>
</div>
<div class="row" style="top:570px">
<div class="rbg"></div><span class="cb"></span>
<span class="dev"></span><span class="c c0">Pixel 4a</span>
<span class="c c1">Pixel 4a</span><span class="c c2">Google</span><span class="c c3"></span>
<svg class="andr" viewBox="0 0 16 10" width="15" height="9"><path fill-rule="evenodd" d="M0.3 9.6 C0.6 4.6 3.8 1.9 8 1.9 S15.4 4.6 15.7 9.6 Z M3.9 6.4 a0.8 0.8 0 1 0 1.6 0 a0.8 0.8 0 1 0 -1.6 0 Z M10.5 6.4 a0.8 0.8 0 1 0 1.6 0 a0.8 0.8 0 1 0 -1.6 0 Z" fill="#0a820a"/><path d="M3.6 0.4 L5.3 3 M12.4 0.4 L10.7 3" stroke="#0a820a" stroke-width="0.9" fill="none"/></svg>
<span class="c c4">Android 13</span><span class="c c5">master</span>
<svg class="up" viewBox="0 0 12 13" width="12" height="13"><path d="M6 12.5 V1.5 M1 6.3 L6 1.3 L11 6.3" fill="none" stroke="#2f9a3a" stroke-width="1.5"/></svg>
<span class="c c6">17.10.2023 08:56</span><span class="c c7">17.10.2023 06:23:07</span>
</div>
<div class="row" style="top:601px">
<div class="rbg"></div><span class="cb"></span>
<span class="dev"></span><span class="c c0">Pixel 4a</span>
<span class="c c1">Pixel 4a</span><span class="c c2">Google</span><span class="c c3"></span>
<svg class="andr" viewBox="0 0 16 10" width="15" height="9"><path fill-rule="evenodd" d="M0.3 9.6 C0.6 4.6 3.8 1.9 8 1.9 S15.4 4.6 15.7 9.6 Z M3.9 6.4 a0.8 0.8 0 1 0 1.6 0 a0.8 0.8 0 1 0 -1.6 0 Z M10.5 6.4 a0.8 0.8 0 1 0 1.6 0 a0.8 0.8 0 1 0 -1.6 0 Z" fill="#0a820a"/><path d="M3.6 0.4 L5.3 3 M12.4 0.4 L10.7 3" stroke="#0a820a" stroke-width="0.9" fill="none"/></svg>
<span class="c c4">Android 13</span><span class="c c5">1.8.17</span>
<svg class="up" viewBox="0 0 12 13" width="12" height="13"><path d="M6 12.5 V1.5 M1 6.3 L6 1.3 L11 6.3" fill="none" stroke="#2f9a3a" stroke-width="1.5"/></svg>
<span class="c c6">18.10.2023 07:51</span><span class="c c7">17.10.2023 07:34:50</span>
</div>
<div class="row" style="top:632px">
<div class="rbg"></div><span class="cb"></span>
<span class="dev"></span><span class="c c0">Galaxy A10</span>
<span class="c c1">SM-A105FN</span><span class="c c2">samsung</span><span class="c c3">355460115822048</span>
<svg class="andr" viewBox="0 0 16 10" width="15" height="9"><path fill-rule="evenodd" d="M0.3 9.6 C0.6 4.6 3.8 1.9 8 1.9 S15.4 4.6 15.7 9.6 Z M3.9 6.4 a0.8 0.8 0 1 0 1.6 0 a0.8 0.8 0 1 0 -1.6 0 Z M10.5 6.4 a0.8 0.8 0 1 0 1.6 0 a0.8 0.8 0 1 0 -1.6 0 Z" fill="#0a820a"/><path d="M3.6 0.4 L5.3 3 M12.4 0.4 L10.7 3" stroke="#0a820a" stroke-width="0.9" fill="none"/></svg>
<span class="c c4">Android 11</span><span class="c c5">1.8.16</span>
<svg class="up" viewBox="0 0 12 13" width="12" height="13"><path d="M6 12.5 V1.5 M1 6.3 L6 1.3 L11 6.3" fill="none" stroke="#2f9a3a" stroke-width="1.5"/></svg>
<span class="c c6">17.10.2023 11:41</span><span class="c c7">18.09.2023 05:42:28</span>
</div>
<div class="row" style="top:663px">
<div class="rbg"></div><span class="cb"></span>
<span class="dev"></span><span class="c c0">Galaxy A13</span>
<span class="c c1">SM-A135F</span><span class="c c2">samsung</span><span class="c c3">356002720127758</span>
<svg class="andr" viewBox="0 0 16 10" width="15" height="9"><path fill-rule="evenodd" d="M0.3 9.6 C0.6 4.6 3.8 1.9 8 1.9 S15.4 4.6 15.7 9.6 Z M3.9 6.4 a0.8 0.8 0 1 0 1.6 0 a0.8 0.8 0 1 0 -1.6 0 Z M10.5 6.4 a0.8 0.8 0 1 0 1.6 0 a0.8 0.8 0 1 0 -1.6 0 Z" fill="#0a820a"/><path d="M3.6 0.4 L5.3 3 M12.4 0.4 L10.7 3" stroke="#0a820a" stroke-width="0.9" fill="none"/></svg>
<span class="c c4">Android 12</span><span class="c c5">1.8.17</span>
<svg class="up" viewBox="0 0 12 13" width="12" height="13"><path d="M6 12.5 V1.5 M1 6.3 L6 1.3 L11 6.3" fill="none" stroke="#2f9a3a" stroke-width="1.5"/></svg>
<span class="c c6">20.11.2023 17:04</span><span class="c c7">25.10.2023 06:54:16</span>
</div>
<div class="row" style="top:694px">
<div class="rbg"></div><span class="cb"></span>
<span class="dev"></span><span class="c c0">Pixel 4a</span>
<span class="c c1">Pixel 4a</span><span class="c c2">Google</span><span class="c c3">357480103545201</span>
<svg class="andr" viewBox="0 0 16 10" width="15" height="9"><path fill-rule="evenodd" d="M0.3 9.6 C0.6 4.6 3.8 1.9 8 1.9 S15.4 4.6 15.7 9.6 Z M3.9 6.4 a0.8 0.8 0 1 0 1.6 0 a0.8 0.8 0 1 0 -1.6 0 Z M10.5 6.4 a0.8 0.8 0 1 0 1.6 0 a0.8 0.8 0 1 0 -1.6 0 Z" fill="#0a820a"/><path d="M3.6 0.4 L5.3 3 M12.4 0.4 L10.7 3" stroke="#0a820a" stroke-width="0.9" fill="none"/></svg>
<span class="c c4">Android 13</span><span class="c c5">1.8.18</span>
<svg class="up" viewBox="0 0 12 13" width="12" height="13"><path d="M6 12.5 V1.5 M1 6.3 L6 1.3 L11 6.3" fill="none" stroke="#2f9a3a" stroke-width="1.5"/></svg>
<span class="c c6">20.11.2023 20:50</span><span class="c c7">15.11.2023 09:51:40</span>
</div>
<div class="row" style="top:725px">
<div class="rbg"></div><span class="cb"></span>
<span class="dev"></span><span class="c c0">Galaxy A10</span>
<span class="c c1">SM-A105FN</span><span class="c c2">samsung</span><span class="c c3"></span>
<svg class="andr" viewBox="0 0 16 10" width="15" height="9"><path fill-rule="evenodd" d="M0.3 9.6 C0.6 4.6 3.8 1.9 8 1.9 S15.4 4.6 15.7 9.6 Z M3.9 6.4 a0.8 0.8 0 1 0 1.6 0 a0.8 0.8 0 1 0 -1.6 0 Z M10.5 6.4 a0.8 0.8 0 1 0 1.6 0 a0.8 0.8 0 1 0 -1.6 0 Z" fill="#0a820a"/><path d="M3.6 0.4 L5.3 3 M12.4 0.4 L10.7 3" stroke="#0a820a" stroke-width="0.9" fill="none"/></svg>
<span class="c c4">Android 11</span><span class="c c5">1.8.16</span>
<svg class="up" viewBox="0 0 12 13" width="12" height="13"><path d="M6 12.5 V1.5 M1 6.3 L6 1.3 L11 6.3" fill="none" stroke="#2f9a3a" stroke-width="1.5"/></svg>
<span class="c c6">05.10.2023 13:35</span><span class="c c7">18.09.2023 10:29:28</span>
</div>

<!-- pager -->
<div id="pager"></div>
<svg class="abs" style="left:338px;top:774.5px" width="9" height="9" viewBox="0 0 9 9"><path d="M1 0.5 V8.5" stroke="#666" stroke-width="1.2"/><path d="M8.4 0.6 V8.4 L2.6 4.5 Z" fill="#666"/></svg>
<svg class="abs" style="left:369px;top:774.5px" width="8" height="9" viewBox="0 0 8 9"><path d="M7.4 0.6 V8.4 L1 4.5 Z" fill="#666"/></svg>
<div class="abs" style="left:389px;top:763px;width:31px;height:31px;background:#d0d3f3;color:#2b32d1;font-family:'Liberation Serif',serif;font-size:16px;line-height:32px;text-align:center">1</div>
<svg class="abs" style="left:432px;top:774.5px" width="8" height="9" viewBox="0 0 8 9"><path d="M0.6 0.6 V8.4 L7 4.5 Z" fill="#666"/></svg>
<svg class="abs" style="left:461px;top:774.5px" width="9" height="9" viewBox="0 0 9 9"><path d="M8 0.5 V8.5" stroke="#666" stroke-width="1.2"/><path d="M0.6 0.6 V8.4 L6.4 4.5 Z" fill="#666"/></svg>
<div class="pg-t" style="left:495px;top:771px">Strona</div>
<div class="abs" style="left:540px;top:763px;width:65px;height:31px;border:1px solid #e2e6f7;border-radius:5px;background:#f8f8fb"></div>
<div class="pg-t" style="left:552px;top:771px;font-size:12px">1</div>
<div class="pg-t" style="left:612px;top:771px">z 1</div>
<div class="abs" style="left:642px;top:763px;width:65px;height:31px;border:1px solid #e2e6f7;border-radius:5px;background:#f8f8fb"></div>
<div class="abs" style="left:679px;top:763px;width:28px;height:31px;border-radius:0 5px 5px 0;background:#e8ebfb"></div>
<svg class="abs" style="left:688px;top:776px" width="9" height="6" viewBox="0 0 9 6"><path d="M0.2 0.2 H8.8 L4.5 5.9 Z" fill="#2b32d1"/></svg>
<div class="pg-t" style="left:653px;top:771px;font-size:12px">20</div>
<div class="pg-t" style="left:714px;top:771px">na stronę</div>
<div class="pg-t" style="left:1642px;top:771px">Wyświetlanie elementów 1 - 12 z 12</div>
<svg class="abs" style="left:1871px;top:771px" width="15" height="16" viewBox="0 0 15 16" fill="none" stroke="#222" stroke-width="1.5"><path d="M7.6 3.4 A5.6 5.6 0 1 0 13.2 9"/><path d="M7 0.4 L10.4 3.4 L7 6.4 Z" fill="#222" stroke="none"/></svg>

<!-- dropdown -->
<div id="menu">
<div class="mi first" style="top:0px">Zdalne czyszczenie</div>
<div class="mi" style="top:27px">Zrzut ekranu</div>
<div class="mi" style="top:53px">Pobierz logi</div>
<div class="mi" style="top:79px">Wyślij powiadomienie</div>
<div class="mi" style="top:105px">Skanuj pliki</div>
<div class="mi" style="top:131px">Kopia zapasowa</div>
<div class="mi" style="top:157px">Odtwórz kopię zapasową</div>
<div class="mi" style="top:183px">Przypisz politykę</div>
<div class="mi" style="top:209px">Przypisz profil</div>
<div class="mi" style="top:235px">Przypisz osobę</div>
<div class="mi" style="top:261px">Dezaktywacja</div>
<div class="mi" style="top:287px">Reset hasła</div>
<div class="mi" style="top:313px">Zainstaluj aplikację</div>
<div class="mi" style="top:339px">Uruchom ponownie</div>
<div class="mi" style="top:365px">Zablokuj</div>
<div class="mi" style="top:391px">Odblokuj</div>
<div class="mi" style="top:417px">Check for agent update</div>
</div>
<div id="hl"><span>Przypisz politykę</span></div>

<!-- green arrow -->
<svg class="abs" style="left:370px;top:90px;filter:drop-shadow(1px 3px 2px rgba(0,0,0,.3))" width="410" height="50" viewBox="370 90 410 50"><path d="M379 120.7 L402 107 L398.5 114.2 L770 96.9 L770.6 98.3 L399.5 125.6 L403 131 Z" fill="#92d540"/></svg>

</body></html>
